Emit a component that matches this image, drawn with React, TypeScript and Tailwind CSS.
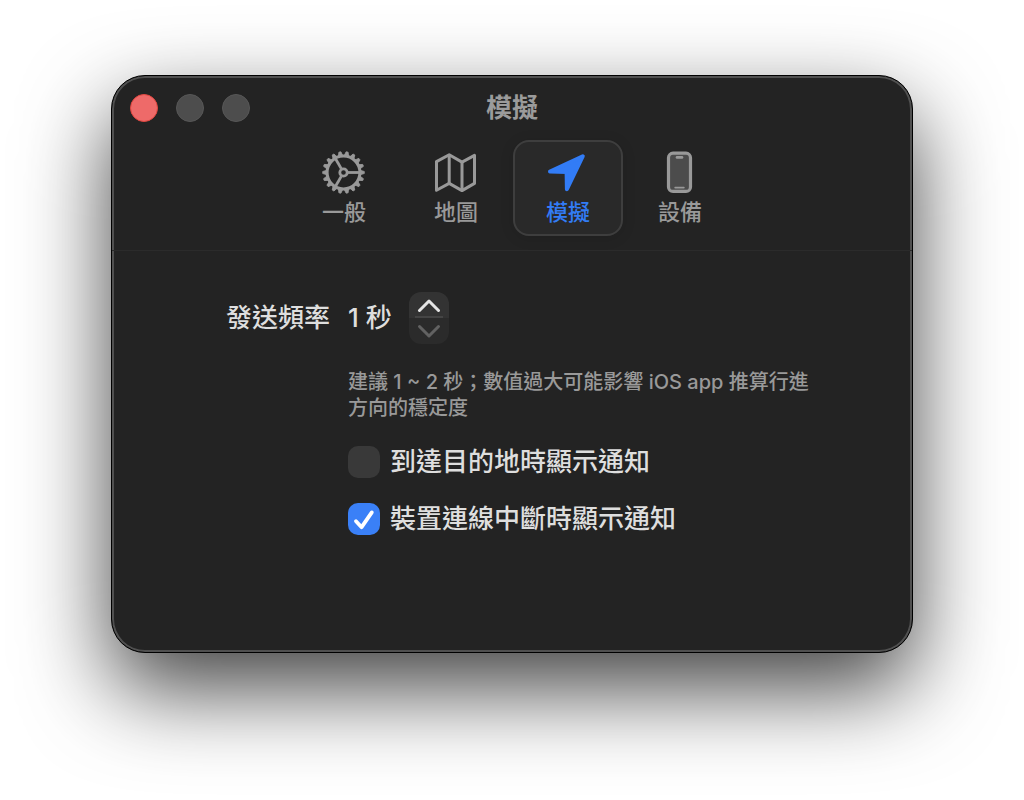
import { useState, type ReactNode } from "react";

type TabId = "general" | "map" | "simulation" | "device";

const MIN_SECONDS = 1;
const MAX_SECONDS = 10;

const GEAR_TEETH = Array.from({ length: 18 }, (_, i) => i * 20);
const GEAR_SPOKES = [0, 120, 240];

function GearIcon() {
  return (
    <svg
      viewBox="0 0 42 42"
      className="size-[42px] overflow-visible"
      fill="none"
      stroke="currentColor"
      aria-hidden="true"
    >
      <circle cx="20.5" cy="21.5" r="16.4" strokeWidth="3" />
      <circle cx="20.5" cy="21.5" r="3.7" strokeWidth="2.8" />
      {GEAR_TEETH.map((deg) => (
        <path
          key={deg}
          d="M37 19.2l4.3 1.3v2L37 23.8z"
          fill="currentColor"
          strokeWidth="0.8"
          strokeLinejoin="round"
          transform={`rotate(${deg} 20.5 21.5)`}
        />
      ))}
      {GEAR_SPOKES.map((deg) => (
        <path
          key={deg}
          d="M25 21.5h12"
          strokeWidth="2.8"
          transform={`rotate(${deg} 20.5 21.5)`}
        />
      ))}
    </svg>
  );
}

function MapIcon() {
  return (
    <svg
      viewBox="0 0 42 42"
      className="size-[42px] overflow-visible"
      fill="none"
      stroke="currentColor"
      strokeWidth="3"
      strokeLinejoin="round"
      aria-hidden="true"
    >
      <path d="M1.5 10.6L14.2 3.7l12.8 7.4L39.5 4.4v28L27 39.6 14.2 32.4 1.5 39.2z" />
      <path d="M14.2 3.7v28.7M27 11.1v28.5" />
    </svg>
  );
}

function LocationIcon() {
  return (
    <svg
      viewBox="0 0 42 42"
      className="size-[42px]"
      fill="currentColor"
      stroke="currentColor"
      strokeWidth="4"
      strokeLinejoin="round"
      aria-hidden="true"
    >
      <path d="M35.8 5.2L3 20.6l16.6.4.3 17.2z" />
    </svg>
  );
}

function PhoneIcon() {
  return (
    <svg
      viewBox="0 0 42 42"
      className="size-[42px]"
      fill="none"
      stroke="currentColor"
      strokeLinecap="round"
      aria-hidden="true"
    >
      <rect
        x="9.5"
        y="2.2"
        width="22"
        height="38.2"
        rx="4.5"
        fill="#4c4c4c"
        strokeWidth="3.2"
      />
      <path d="M18 6.4h5" strokeWidth="2.6" />
      <path d="M16.2 36.6h8.6" strokeWidth="1.8" />
    </svg>
  );
}

const TABS: { id: TabId; label: string; icon: ReactNode }[] = [
  { id: "general", label: "一般", icon: <GearIcon /> },
  { id: "map", label: "地圖", icon: <MapIcon /> },
  { id: "simulation", label: "模擬", icon: <LocationIcon /> },
  { id: "device", label: "設備", icon: <PhoneIcon /> },
];

function TitleBar({ title }: { title: string }) {
  return (
    <header className="grid grid-cols-[1fr_auto_1fr] items-center px-[18px] pt-[18px]">
      <div className="flex gap-[18px]">
        <button
          aria-label="關閉"
          className="size-7 rounded-full border border-[#e2463f] bg-[#ee6a69]"
        />
        <button
          aria-label="最小化"
          disabled
          className="size-7 rounded-full border border-[#575757] bg-[#4d4d4d]"
        />
        <button
          aria-label="縮放"
          disabled
          className="size-7 rounded-full border border-[#575757] bg-[#4d4d4d]"
        />
      </div>
      <h1 className="text-[26px] leading-7 font-bold text-[#9b9b9b]">
        {title}
      </h1>
    </header>
  );
}

function Toolbar({
  active,
  onSelect,
}: {
  active: TabId;
  onSelect: (id: TabId) => void;
}) {
  return (
    <nav className="flex justify-center gap-0.5 border-b border-[#2b2b2b] px-4 pt-[18px] pb-[14px]">
      {TABS.map((tab) => (
        <button
          key={tab.id}
          onClick={() => onSelect(tab.id)}
          aria-current={tab.id === active ? "page" : undefined}
          className={`flex h-24 w-[110px] flex-col items-center rounded-2xl border-2 pt-[9px] text-[22px] leading-[38px] font-medium ${
            tab.id === active
              ? "border-[#3e3e3e] bg-[#292929] text-[#327cf6] shadow-[0_2px_14px_rgba(0,0,0,0.12)]"
              : "border-transparent text-[#999999]"
          }`}
        >
          {tab.icon}
          {tab.label}
        </button>
      ))}
    </nav>
  );
}

function Stepper({
  value,
  onChange,
}: {
  value: number;
  onChange: (value: number) => void;
}) {
  return (
    <div className="grid w-10 overflow-hidden rounded-xl">
      <button
        aria-label="增加"
        disabled={value >= MAX_SECONDS}
        onClick={() => onChange(value + 1)}
        className="flex h-[26px] flex-col items-center justify-end bg-[#333333] text-[#e4e4e4] disabled:text-[#626262]"
      >
        <svg
          viewBox="0 0 28 17"
          className="h-[17px] w-7"
          fill="none"
          stroke="currentColor"
          strokeWidth="3"
          strokeLinecap="round"
          strokeLinejoin="round"
          aria-hidden="true"
        >
          <path d="M4.5 11.5L14 2l9.5 9.5" />
        </svg>
        <span className="h-0.5 w-7 bg-[#454545]" />
      </button>
      <button
        aria-label="減少"
        disabled={value <= MIN_SECONDS}
        onClick={() => onChange(value - 1)}
        className="flex h-[26px] items-center justify-center bg-[#2b2b2b] text-[#e4e4e4] disabled:text-[#626262]"
      >
        <svg
          viewBox="0 0 28 26"
          className="h-[26px] w-7"
          fill="none"
          stroke="currentColor"
          strokeWidth="3"
          strokeLinecap="round"
          strokeLinejoin="round"
          aria-hidden="true"
        >
          <path d="M4.5 8.5L14 18l9.5-9.5" />
        </svg>
      </button>
    </div>
  );
}

function CheckRow({
  label,
  checked,
  onChange,
}: {
  label: string;
  checked: boolean;
  onChange: (checked: boolean) => void;
}) {
  return (
    <label className="col-start-2 flex items-center gap-2.5 leading-8">
      <span className="grid shrink-0">
        <input
          type="checkbox"
          checked={checked}
          onChange={(e) => onChange(e.target.checked)}
          className="col-start-1 row-start-1 size-8 appearance-none rounded-[10px] bg-[#393939] checked:bg-[#3a80f7]"
        />
        {checked && (
          <svg
            viewBox="0 0 32 32"
            className="pointer-events-none col-start-1 row-start-1 size-8"
            fill="none"
            stroke="white"
            strokeWidth="3.8"
            strokeLinecap="round"
            strokeLinejoin="round"
            aria-hidden="true"
          >
            <path d="M8 18.2l5.6 6L23.8 9.4" />
          </svg>
        )}
      </span>
      {label}
    </label>
  );
}

export default function App() {
  const [tab, setTab] = useState<TabId>("simulation");
  const [seconds, setSeconds] = useState(1);
  const [notifyArrival, setNotifyArrival] = useState(false);
  const [notifyDisconnect, setNotifyDisconnect] = useState(true);

  const title = TABS.find((t) => t.id === tab)?.label ?? "";

  return (
    <div
      lang="zh-Hant"
      className="min-h-screen bg-white px-[111px] pt-[75px] pb-[147px] font-['Inter','Noto_Sans_CJK_TC',sans-serif]"
    >
      <main className="mx-auto max-w-[802px] rounded-[34px] border border-black bg-[#232323] shadow-[inset_0_0_0_2px_#505050,0_36px_88px_rgba(0,0,0,0.74)]">
        <TitleBar title={title} />
        <Toolbar active={tab} onSelect={setTab} />

        <form
          className="grid grid-cols-[auto_minmax(0,1fr)] gap-x-[18px] gap-y-[25px] pt-[41px] pr-[98px] pb-[117px] pl-[114px] text-[26px] font-medium text-[#dedede]"
          onSubmit={(e) => e.preventDefault()}
        >
          <span className="self-center leading-9">發送頻率</span>
          <div className="flex items-center gap-[17px] leading-9">
            <output>{seconds} 秒</output>
            <Stepper value={seconds} onChange={setSeconds} />
          </div>

          <p className="col-start-2 text-xl leading-[26px] text-[#999999]">
            建議 1 ~ 2 秒；數值過大可能影響 iOS app 推算行進方向的穩定度
          </p>

          <CheckRow
            label="到達目的地時顯示通知"
            checked={notifyArrival}
            onChange={setNotifyArrival}
          />
          <CheckRow
            label="裝置連線中斷時顯示通知"
            checked={notifyDisconnect}
            onChange={setNotifyDisconnect}
          />
        </form>
      </main>
    </div>
  );
}
